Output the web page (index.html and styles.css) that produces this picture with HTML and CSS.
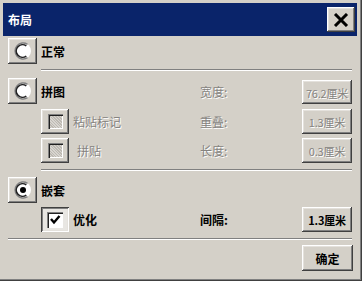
FILE: index.html
```html
<!DOCTYPE html>
<html lang="zh-CN">
<head>
    <meta charset="UTF-8">
    <title>布局</title>
    <link rel="stylesheet" href="styles.css">
</head>
<body>
    <div class="window">
        <div class="titlebar">
            <span class="title">布局</span>
            <span class="btn close">
                <svg width="16" height="14" viewBox="0 0 16 14">
                    <path d="M2 1 L14 13 M14 1 L2 13" stroke="#000" stroke-width="3"/>
                </svg>
            </span>
        </div>
        <div class="content">
            <div class="row r1">
                <div class="left">
                    <span class="btn radio">
                        <svg width="18" height="18" viewBox="0 0 18 18">
                            <circle cx="9" cy="9" r="8" fill="#fff"/>
                            <path d="M13.5 2.3 A8 8 0 1 0 13.5 15.7" fill="none" stroke="#808080" stroke-width="1.5"/>
                            <path d="M12.3 3.9 A6.3 6.3 0 1 0 12.3 14.1" fill="none" stroke="#202020" stroke-width="1.6"/>
                        </svg>
                    </span>
                    <span class="label">正常</span>
                </div>
            </div>
            <div class="sep"></div>
            <div class="row r2">
                <div class="left">
                    <span class="btn radio">
                        <svg width="18" height="18" viewBox="0 0 18 18">
                            <circle cx="9" cy="9" r="8" fill="#fff"/>
                            <path d="M13.5 2.3 A8 8 0 1 0 13.5 15.7" fill="none" stroke="#808080" stroke-width="1.5"/>
                            <path d="M12.3 3.9 A6.3 6.3 0 1 0 12.3 14.1" fill="none" stroke="#202020" stroke-width="1.6"/>
                        </svg>
                    </span>
                    <span class="label">拼图</span>
                </div>
                <span class="field dim">宽度:</span>
                <span class="btn value dim">76.2厘米</span>
            </div>
            <div class="row r3">
                <div class="left sub">
                    <span class="btn check"><span class="box off"></span></span>
                    <span class="label dim">粘贴标记</span>
                </div>
                <span class="field dim">重叠:</span>
                <span class="btn value dim">1.3厘米</span>
            </div>
            <div class="row r4">
                <div class="left sub">
                    <span class="btn check"><span class="box off"></span></span>
                    <span class="label dim shift">拼贴</span>
                </div>
                <span class="field dim">长度:</span>
                <span class="btn value dim">0.3厘米</span>
            </div>
            <div class="sep"></div>
            <div class="row r5">
                <div class="left">
                    <span class="btn radio">
                        <svg width="18" height="18" viewBox="0 0 18 18">
                            <circle cx="9" cy="9" r="8" fill="#fff"/>
                            <path d="M13.5 2.3 A8 8 0 1 0 13.5 15.7" fill="none" stroke="#808080" stroke-width="1.5"/>
                            <path d="M12.3 3.9 A6.3 6.3 0 1 0 12.3 14.1" fill="none" stroke="#202020" stroke-width="1.6"/>
                            <circle cx="9" cy="9" r="3" fill="#000"/>
                        </svg>
                    </span>
                    <span class="label">嵌套</span>
                </div>
            </div>
            <div class="row r6">
                <div class="left sub">
                    <span class="btn check pressed">
                        <span class="box on">
                            <svg width="12" height="12" viewBox="0 0 12 12">
                                <path d="M2 5 L5 8.5 L10.5 2" fill="none" stroke="#000" stroke-width="2.4"/>
                            </svg>
                        </span>
                    </span>
                    <span class="label">优化</span>
                </div>
                <span class="field">间隔:</span>
                <span class="btn value">1.3厘米</span>
            </div>
            <div class="sep full"></div>
            <div class="footer">
                <span class="btn ok">确定</span>
            </div>
        </div>
    </div>
</body>
</html>
```

FILE: styles.css
```css
body {
    margin: 0;
    background-color: #d4d0c8;
    font-family: "Noto Sans CJK SC", "Liberation Sans", sans-serif;
    font-size: 12px;
    font-weight: bold;
    color: #000;
}
.window {
    width: 362px;
    height: 281px;
    box-sizing: border-box;
    padding: 3px 5px 3px 3px;
    background-color: #d4d0c8;
    box-shadow: inset -1px -1px #404040, inset -2px -2px #808080;
}
.titlebar {
    height: 33px;
    background-color: #0a246a;
    display: flex;
    align-items: center;
    justify-content: space-between;
    padding: 0 2px 0 5px;
}
.title {
    color: #fff;
}
.btn {
    display: flex;
    align-items: center;
    justify-content: center;
    box-sizing: border-box;
    background-color: #d4d0c8;
    box-shadow: inset -1px -1px #404040, inset 1px 1px #fff, inset -2px -2px #808080, inset 2px 2px #e4e1dc;
}
.close {
    width: 28px;
    height: 25px;
}
.content {
    padding: 2px 0 0 5px;
}
.row {
    display: grid;
    grid-template-columns: 192px 102px 50px;
    align-items: center;
}
.left {
    display: flex;
    align-items: center;
    gap: 4px;
}
.left.sub {
    padding-left: 33px;
}
.radio {
    width: 29px;
    height: 26px;
}
.check {
    width: 28px;
    height: 25px;
}
.check.pressed {
    box-shadow: inset 1px 1px #404040, inset -1px -1px #fff, inset 2px 2px #808080, inset -2px -2px #e4e1dc;
    background-color: #e8e6e2;
}
.box {
    width: 15px;
    height: 15px;
    box-sizing: border-box;
    display: flex;
    align-items: center;
    justify-content: center;
    box-shadow: inset 1px 1px #808080, inset 2px 2px #202020, inset -1px -1px #fff;
}
.box.off {
    background-color: #c8c5c0;
    background-image: repeating-linear-gradient(45deg, #bdb9b2 0 1px, #d8d5d0 1px 2px);
}
.box.on {
    background-color: #fff;
    width: 16px;
    height: 16px;
}
.label.shift {
    padding-left: 4px;
}
.dim {
    color: #858380;
    font-weight: normal;
    text-shadow: 1px 1px #fff;
}
.value {
    height: 25px;
    padding-top: 1px;
    font-size: 11px;
    letter-spacing: -0.2px;
}
.r1 {
    height: 26px;
}
.r2 {
    height: 26px;
    margin-top: 7px;
}
.r2 .value {
    height: 24px;
    align-self: end;
}
.r3 {
    height: 25px;
    margin-top: 5px;
}
.r4 {
    height: 25px;
    margin-top: 4px;
}
.r5 {
    height: 26px;
    margin-top: 6px;
}
.r6 {
    height: 25px;
    margin-top: 4px;
}
.sep {
    height: 0;
    margin: 5px 0 0 33px;
    border-top: 1px solid #808080;
    border-bottom: 1px solid #fff;
    width: 311px;
}
.r4 + .sep {
    margin-top: 6px;
}
.sep.full {
    margin: 6px 0 0 0;
    width: 344px;
}
.footer {
    display: flex;
    justify-content: flex-end;
    margin-top: 5px;
    width: 345px;
}
.ok {
    width: 51px;
    height: 26px;
}
```
